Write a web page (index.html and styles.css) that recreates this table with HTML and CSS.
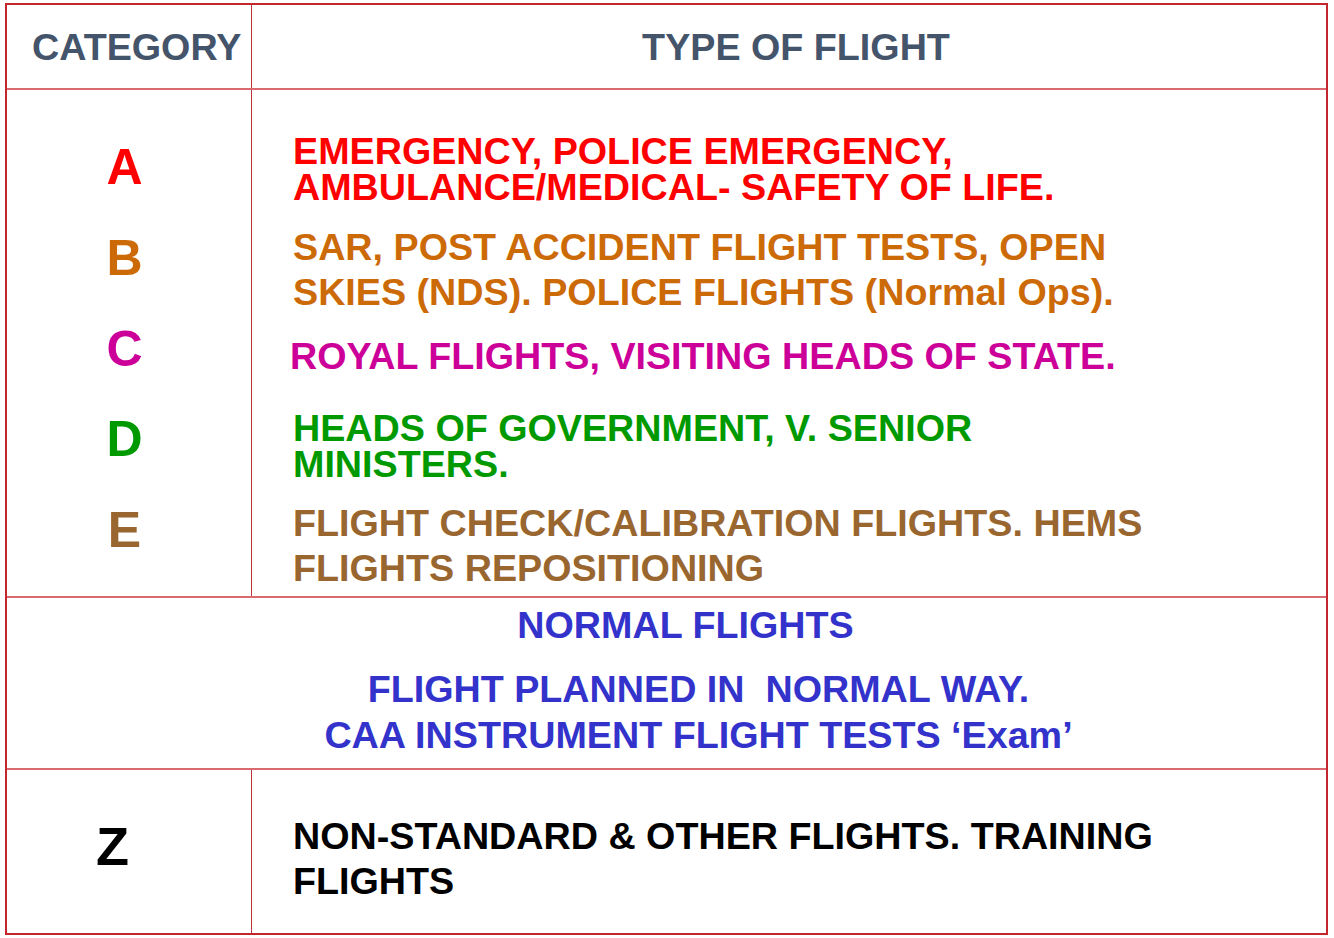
FILE: index.html
```html
<!DOCTYPE html>
<html lang="en">
<head>
<meta charset="utf-8">
<title>Flight Categories</title>
<link rel="stylesheet" href="styles.css">
</head>
<body>
<div class="table">
  <div class="row head">
    <div class="cell cat">CATEGORY</div>
    <div class="cell type">TYPE OF FLIGHT</div>
  </div>
  <div class="row body">
    <div class="cell letters">
      <div class="letter c-a">A</div>
      <div class="letter c-b">B</div>
      <div class="letter c-c">C</div>
      <div class="letter c-d">D</div>
      <div class="letter c-e">E</div>
    </div>
    <div class="cell texts">
      <p class="t t-a c-a">EMERGENCY, POLICE EMERGENCY,<br>AMBULANCE/MEDICAL- SAFETY OF LIFE.</p>
      <p class="t t-b c-b">SAR, POST ACCIDENT FLIGHT TESTS, OPEN<br>SKIES (NDS). POLICE FLIGHTS (Normal Ops).</p>
      <p class="t t-c c-c">ROYAL FLIGHTS, VISITING HEADS OF STATE.</p>
      <p class="t t-d c-d">HEADS OF GOVERNMENT, V. SENIOR<br>MINISTERS.</p>
      <p class="t t-e c-e">FLIGHT CHECK/CALIBRATION FLIGHTS. HEMS<br>FLIGHTS REPOSITIONING</p>
    </div>
  </div>
  <div class="normal">
    <p class="n1">NORMAL FLIGHTS</p>
    <p class="n2">FLIGHT PLANNED IN &nbsp;NORMAL WAY.<br>CAA INSTRUMENT FLIGHT TESTS ‘Exam’</p>
  </div>
  <div class="row zrow">
    <div class="cell zcell"><span class="zletter">Z</span></div>
    <div class="cell ztext"><p class="t t-z">NON-STANDARD &amp; OTHER FLIGHTS. TRAINING<br>FLIGHTS</p></div>
  </div>
</div>
</body>
</html>
```

FILE: styles.css
```css
* { box-sizing: border-box; }
html, body { margin: 0; padding: 0; background: #ffffff; }
body {
  font-family: "Liberation Sans", Arial, "Helvetica", sans-serif;
  font-weight: bold;
}
p { margin: 0; }

.table {
  margin: 3px 0 0 5px;
  width: 1323px;
  height: 932px;
  border: 2px solid #c4262e;
  display: flex;
  flex-direction: column;
}

.row { display: flex; }

.cell.cat, .cell.letters, .cell.zcell {
  width: 245px;
  flex: none;
  border-right: 1px solid #b9343c;
}

.head {
  height: 85px;
  border-bottom: 2px solid #d86a70;
  font-size: 37.7px;
  color: #44546a;
  line-height: 83px;
}
.head .cat { padding-left: 25px; padding-top: 1px; }
.head .type { flex: 1; text-align: center; padding-left: 14px; padding-top: 1px; }

.body {
  height: 508px;
  border-bottom: 2px solid #d86a70;
}
.letters {
  padding-top: 32px;
  padding-right: 9px;
  text-align: center;
  font-size: 50px;
  line-height: 90.75px;
}
.texts {
  flex: 1;
  padding-left: 41px;
  padding-top: 43px;
}
.t { font-size: 37.7px; }
.t-a { line-height: 36px; }
.t-b { line-height: 45px; margin-top: 20px; }
.t-c { line-height: 45px; margin-top: 19px; margin-left: -3px; }
.t-d { line-height: 35.5px; margin-top: 32px; }
.t-e { line-height: 45px; margin-top: 19px; }

.c-a { color: #ff0000; }
.c-b { color: #cc6a08; }
.c-c { color: #cc0099; }
.c-d { color: #009a00; }
.c-e { color: #99662f; }

.normal {
  height: 172px;
  border-bottom: 2px solid #d86a70;
  color: #3333cc;
  font-size: 37.7px;
  text-align: center;
  padding-top: 5px;
}
.n1 { line-height: 45px; padding-left: 38px; }
.n2 { line-height: 46px; margin-top: 18px; padding-left: 64px; }

.zrow { flex: 1; color: #000000; }
.zcell {
  padding-left: 89px;
  padding-top: 44px;
  font-size: 54px;
  line-height: 64px;
}
.ztext {
  flex: 1;
  padding-left: 41px;
  padding-top: 44px;
}
.t-z { line-height: 45px; }
```
